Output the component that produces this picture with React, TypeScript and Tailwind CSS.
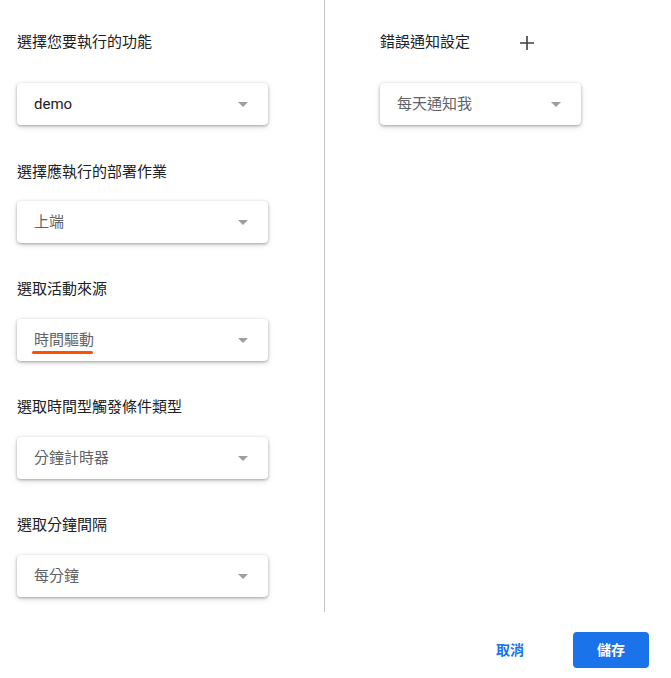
import React from "react";

const font = { fontFamily: 'Roboto, "Noto Sans CJK TC", sans-serif' };

function Arrow() {
  return (
    <svg width="10" height="5" viewBox="0 0 10 5" className="shrink-0">
      <path d="M0 0 L10 0 L5 5 Z" fill="#9e9e9e" />
    </svg>
  );
}

function Select({ value, dark, width, underline }: { value: string; dark?: boolean; width: string; underline?: boolean }) {
  return (
    <div
      className={`${width} h-[42px] rounded-[4px] bg-white flex items-center justify-between pl-[17px] pr-[20px] shadow-[0_1px_3px_rgba(0,0,0,0.3),0_2px_6px_rgba(0,0,0,0.12)]`}
    >
      <span className={`relative text-[15px] leading-[20px] ${dark ? "text-[#202124]" : "text-[#5f6368]"}`}>
        {value}
        {underline && (
          <span className="absolute left-[-2px] right-[1px] top-[21px] h-[3px] rounded-full bg-[#ff5000]" />
        )}
      </span>
      <Arrow />
    </div>
  );
}

function Label({ children }: { children: React.ReactNode }) {
  return <div className="text-[15px] leading-[20px] text-[#202124]">{children}</div>;
}

export default function App() {
  return (
    <div className="w-[671px] h-[678px] bg-white" style={font}>
      <div className="flex">
        <div className="w-[325px] h-[612px] border-r border-[#c4c4c4] pl-[17px] pt-[32px]">
          <Label>選擇您要執行的功能</Label>
          <div className="mt-[31px]">
            <Select value="demo" dark width="w-[251px]" />
          </div>
          <div className="mt-[37px]">
            <Label>選擇應執行的部署作業</Label>
          </div>
          <div className="mt-[19px]">
            <Select value="上端" width="w-[251px]" />
          </div>
          <div className="mt-[36px]">
            <Label>選取活動來源</Label>
          </div>
          <div className="mt-[20px]">
            <Select value="時間驅動" width="w-[251px]" underline />
          </div>
          <div className="mt-[36px]">
            <Label>選取時間型觸發條件類型</Label>
          </div>
          <div className="mt-[20px]">
            <Select value="分鐘計時器" width="w-[251px]" />
          </div>
          <div className="mt-[36px]">
            <Label>選取分鐘間隔</Label>
          </div>
          <div className="mt-[20px]">
            <Select value="每分鐘" width="w-[251px]" />
          </div>
        </div>
        <div className="pl-[55px] pt-[32px]">
          <div className="flex items-center">
            <Label>錯誤通知設定</Label>
            <svg width="14" height="14" viewBox="0 0 14 14" className="ml-[50px] mt-[2px]">
              <path d="M7 0 V14 M0 7 H14" stroke="#3c4043" strokeWidth="1.6" />
            </svg>
          </div>
          <div className="mt-[31px]">
            <Select value="每天通知我" width="w-[201px]" />
          </div>
        </div>
      </div>
      <div className="flex justify-end items-center pr-[22px] pt-[20px]">
        <button className="text-[14px] font-bold text-[#1a73e8] px-[16px] h-[36px] mr-[33px]">取消</button>
        <button className="w-[76px] h-[36px] rounded-[4px] bg-[#1a73e8] text-white text-[14px] font-bold">儲存</button>
      </div>
    </div>
  );
}
